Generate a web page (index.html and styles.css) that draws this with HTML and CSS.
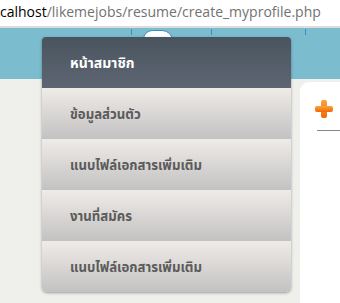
FILE: index.html
```html
<!DOCTYPE html>
<html lang="th">
<head>
    <meta charset="UTF-8">
    <title>create_myprofile</title>
    <link rel="stylesheet" href="styles.css">
</head>
<body>
    <div class="address-bar">
        <span class="host">calhost</span><span class="path">/likemejobs/resume/create_myprofile.php</span>
    </div>
    <div class="page">
        <div class="deco">
            <span class="tick t1"></span>
            <span class="tick t2"></span>
            <span class="tick t3"></span>
            <span class="cloud"></span>
        </div>
        <ul class="menu">
            <li class="menu-head">หน้าสมาชิก</li>
            <li class="menu-item">ข้อมูลส่วนตัว</li>
            <li class="menu-item">แนบไฟล์เอกสารเพิ่มเติม</li>
            <li class="menu-item">งานที่สมัคร</li>
            <li class="menu-item">แนบไฟล์เอกสารเพิ่มเติม</li>
        </ul>
        <div class="card">
            <span class="plus"></span>
            <div class="rule"></div>
        </div>
    </div>
</body>
</html>
```

FILE: styles.css
```css
*{
    margin: 0;
    padding: 0;
    box-sizing: border-box;
}
body{
    width: 340px;
    height: 303px;
    overflow: hidden;
    background: #efefeb;
}
.address-bar{
    height: 28px;
    background: #fff;
    border-bottom: 2px solid #dcdcdc;
    font-family: "Open Sans", "Noto Sans", sans-serif;
    font-size: 14px;
    line-height: 24px;
    white-space: nowrap;
}
.host{
    color: #000;
}
.path{
    color: #727272;
}
.page{
    position: relative;
    display: flex;
    align-items: flex-start;
    padding: 9px 0 0 42px;
    height: 275px;
    overflow: hidden;
    background: linear-gradient(#7bbccf 0, #7bbccf 51px, #efefeb 51px);
}
.deco{
    position: absolute;
    left: 0;
    top: 0;
    width: 100%;
    height: 51px;
}
.tick{
    position: absolute;
    top: 1px;
    width: 1px;
    height: 6px;
    background: #2f8fd0;
}
.t1{ left: 131px; }
.t2{ left: 211px; }
.t3{ left: 305px; }
.cloud{
    position: absolute;
    left: 143px;
    top: 2px;
    width: 30px;
    height: 14px;
    background: #fff;
    border: 1px solid #3d8fb5;
    border-radius: 12px 14px 4px 4px;
}
.menu{
    position: relative;
    list-style: none;
    width: 249px;
    border-radius: 4px 4px 5px 5px;
    overflow: hidden;
    box-shadow: 0 1px 3px rgba(0, 0, 0, 0.35);
    font-family: Tahoma, "Noto Sans Thai", "Noto Sans", "DejaVu Sans", sans-serif;
    font-weight: bold;
}
.menu li{
    height: 51px;
    padding: 2px 0 0 28px;
    display: flex;
    align-items: center;
}
.menu-head{
    background: linear-gradient(#4a545f, #5d6672);
    color: #fff;
    font-size: 14px;
}
.menu-item{
    background: linear-gradient(#efebe8, #c3c2c2);
    color: #5b5b5b;
    font-size: 13.2px;
}
.card{
    flex: 1;
    margin: 45px 0 0 9px;
    height: 221px;
    background: #fff;
    border-radius: 9px 0 0 0;
    padding: 18px 0 0 15px;
}
.plus{
    position: relative;
    display: block;
    width: 18px;
    height: 18px;
}
.plus::before,
.plus::after{
    content: "";
    position: absolute;
    background: linear-gradient(#ffa23a, #ec6a08);
    border-radius: 2px;
}
.plus::before{
    left: 6px;
    top: 0;
    width: 6px;
    height: 18px;
}
.plus::after{
    left: 0;
    top: 6px;
    width: 18px;
    height: 6px;
}
.rule{
    margin: 12px 0 0 2px;
    height: 1px;
    background: #888;
}
```
